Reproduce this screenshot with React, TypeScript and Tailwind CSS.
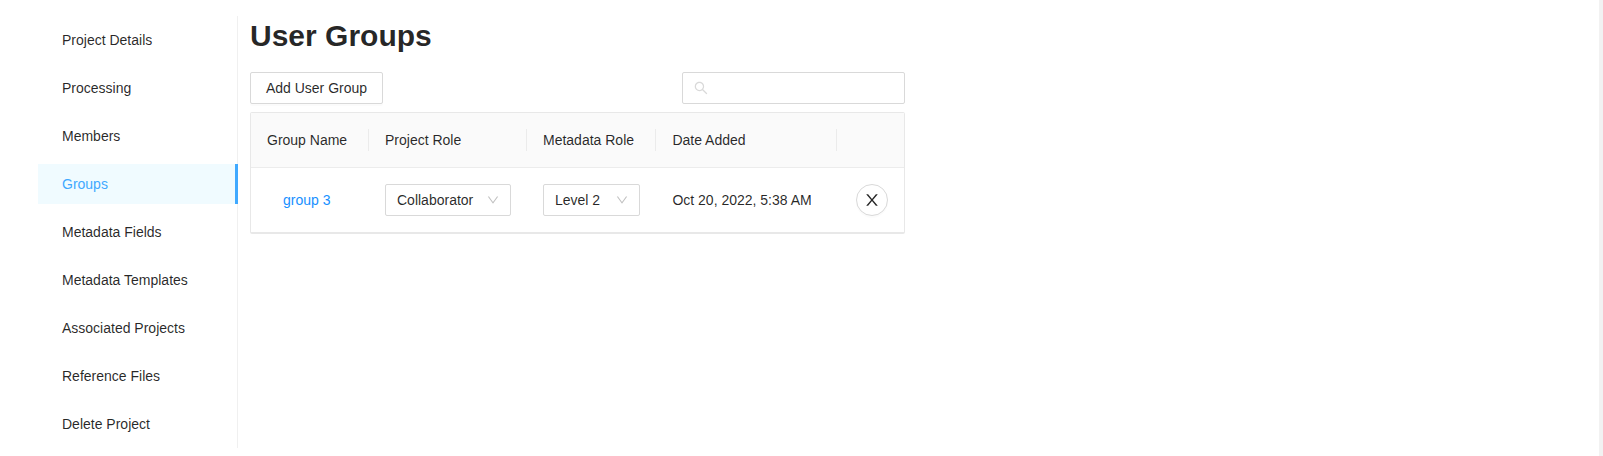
import React from "react";

const menuItems = [
  "Project Details",
  "Processing",
  "Members",
  "Groups",
  "Metadata Fields",
  "Metadata Templates",
  "Associated Projects",
  "Reference Files",
  "Delete Project",
];

const icons = {
  search:
    "M909.6 854.5L649.9 594.8C690.2 542.7 712 479 712 412c0-80.2-31.3-155.4-87.9-212.1-56.6-56.7-132-87.9-212.1-87.9s-155.5 31.3-212.1 87.9C143.2 256.5 112 331.8 112 412c0 80.1 31.3 155.5 87.9 212.1C256.5 680.8 331.8 712 412 712c67 0 130.6-21.8 182.7-62l259.7 259.6a8.2 8.2 0 0011.6 0l43.6-43.5a8.2 8.2 0 000-11.6zM570.4 570.4C528 612.7 471.8 636 412 636s-116-23.3-158.4-65.6C211.3 528 188 471.8 188 412s23.3-116.1 65.6-158.4C296 211.3 352.2 188 412 188s116.1 23.2 158.4 65.6S636 352.2 636 412s-23.3 116.1-65.6 158.4z",
  down: "M884 256h-75c-5.1 0-9.9 2.5-12.9 6.6L512 654.2 227.9 262.6c-3-4.1-7.8-6.6-12.9-6.6h-75c-6.5 0-10.3 7.4-6.5 12.7l352.6 486.1c12.8 17.6 39 17.6 51.7 0l352.6-486.1c3.9-5.3.1-12.7-6.4-12.7z",
  close:
    "M563.8 512l262.5-312.9c4.4-5.2.7-13.1-6.1-13.1h-79.8c-4.7 0-9.2 2.1-12.3 5.7L511.6 449.8 295.1 191.7c-3-3.6-7.5-5.7-12.3-5.7H203c-6.8 0-10.5 7.9-6.1 13.1L459.4 512 196.9 824.9A7.95 7.95 0 00203 838h79.8c4.7 0 9.2-2.1 12.3-5.7l216.5-258.1 216.5 258.1c3 3.6 7.5 5.7 12.3 5.7h79.8c6.8 0 10.5-7.9 6.1-13.1L563.8 512z",
};

function Icon({ name, className }: { name: keyof typeof icons; className: string }) {
  return (
    <svg viewBox="64 64 896 896" fill="currentColor" className={className} aria-hidden="true">
      <path d={icons[name]} />
    </svg>
  );
}

function Select({ value }: { value: string }) {
  return (
    <button className="flex h-8 w-full items-center justify-between rounded-[2px] border border-[#d9d9d9] bg-white px-[11px]">
      <span>{value}</span>
      <Icon name="down" className="size-3 text-black/25" />
    </button>
  );
}

function HeaderCell({ children, last = false }: { children?: React.ReactNode; last?: boolean }) {
  return (
    <div className="flex items-center">
      <span className="flex-1 pl-4">{children}</span>
      {!last && <span className="h-[22px] w-px bg-black/6" />}
    </div>
  );
}

export default function App() {
  return (
    <div className="flex h-[456px] w-full bg-[#f2f2f2] font-['Liberation_Sans',Arial,sans-serif] text-sm leading-[22px] text-black/85">
      <div className="mr-1 flex flex-1 items-start bg-white pt-4 pl-[38px]">
        <nav className="flex w-[200px] flex-col gap-2 border-r border-[#f0f0f0] py-1">
          {menuItems.map((item) =>
            item === "Groups" ? (
              <a
                key={item}
                className="-mr-px flex h-10 items-center border-r-3 border-[#40a9ff] bg-[#f0fbff] pl-6 text-[#40a9ff]"
              >
                {item}
              </a>
            ) : (
              <a key={item} className="flex h-10 items-center pl-6">
                {item}
              </a>
            ),
          )}
        </nav>

        <main className="ml-3 w-[655px]">
          <h1 className="mb-4 text-[30px] leading-10 font-bold">User Groups</h1>
          <div className="mb-2 flex justify-between">
            <button className="h-8 w-[133px] rounded-[2px] border border-[#d9d9d9] bg-white shadow-[0_2px_0_rgba(0,0,0,0.016)]">
              Add User Group
            </button>
            <label className="flex h-8 w-[223px] items-center rounded-[2px] border border-[#d9d9d9] px-[11px]">
              <Icon name="search" className="size-[14px] text-[#d9d9d9]" />
              <input className="ml-1 min-w-0 flex-1 outline-none" />
            </label>
          </div>

          <section className="rounded-[2px] border border-b-2 border-[#e8e8e8]">
            <div className="grid h-[55px] grid-cols-[118px_158px_129.4px_180.6px_67px] border-b border-[#ececec] bg-[#fafafa]">
              <HeaderCell>Group Name</HeaderCell>
              <HeaderCell>Project Role</HeaderCell>
              <HeaderCell>Metadata Role</HeaderCell>
              <HeaderCell>Date Added</HeaderCell>
              <HeaderCell last />
            </div>
            <div className="grid h-16 grid-cols-[118px_158px_129.4px_180.6px_67px] items-center">
              <a className="pl-8 text-[#1890ff]">group 3</a>
              <div className="px-4">
                <Select value="Collaborator" />
              </div>
              <div className="px-4">
                <Select value="Level 2" />
              </div>
              <span className="pl-4">Oct 20, 2022, 5:38 AM</span>
              <button className="mr-4 flex size-8 items-center justify-center justify-self-end rounded-full border border-[#d9d9d9] bg-white shadow-[0_2px_0_rgba(0,0,0,0.016)]">
                <Icon name="close" className="size-4" />
              </button>
            </div>
          </section>
        </main>
      </div>
    </div>
  );
}
